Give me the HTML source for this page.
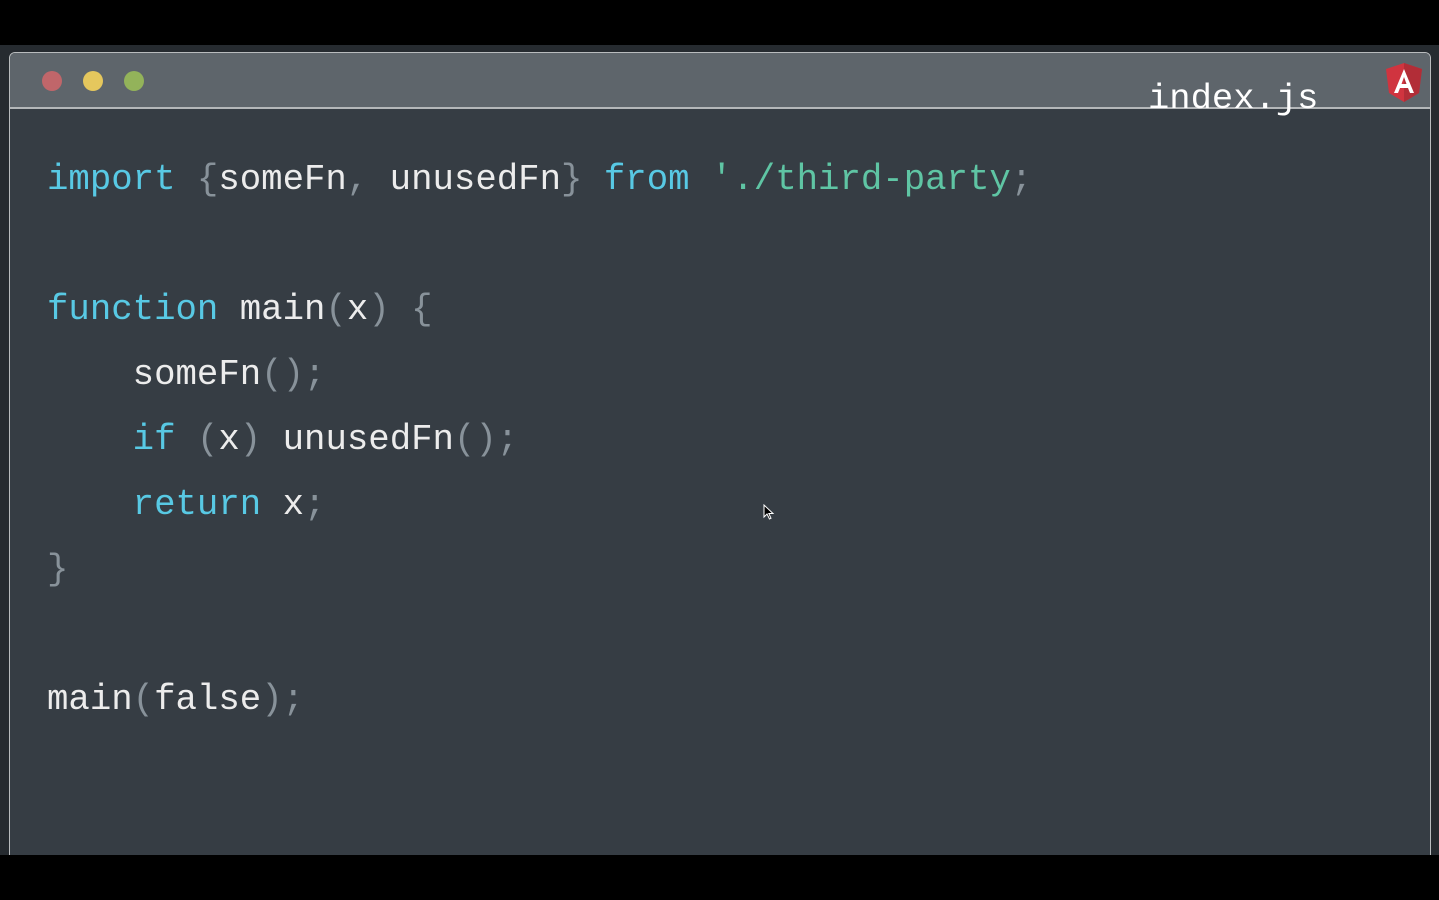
<!DOCTYPE html>
<html><head><meta charset="utf-8"><style>
html,body{margin:0;padding:0;width:1439px;height:900px;overflow:hidden;background:#000;}
.bg{position:absolute;left:0;top:45px;width:1439px;height:810px;background:#262b30;}
.win{position:absolute;left:9px;top:52px;width:1420px;height:820px;border:1px solid #b9bcbe;border-radius:6px;background:#363d44;overflow:hidden;}
.title{position:absolute;left:0;top:0;width:100%;height:54px;background:#5e656b;border-bottom:2px solid #b4b7b9;}
.dot{position:absolute;top:18px;width:20px;height:20px;border-radius:50%;}
.fname{position:absolute;left:1138px;top:25px;font:35.5px "Liberation Mono",monospace;color:#fff;}
.code{position:absolute;left:37px;top:8px;font:35.7px "Liberation Mono",monospace;white-space:pre;color:#ececec;}
.l{position:absolute;left:0;}
.k{color:#58c9e4}.p{color:#88929a}.s{color:#5fc5a4}
.blk{position:absolute;left:0;top:855px;width:1439px;height:45px;background:#000;}
</style></head><body>
<div class="bg"></div>
<div class="win">
 <div class="title">
  <div class="dot" style="left:32px;background:#c0666a"></div>
  <div class="dot" style="left:73px;background:#e5c75d"></div>
  <div class="dot" style="left:114px;background:#93b35a"></div>
  <div class="fname">index.js</div>
  <svg style="position:absolute;left:1375px;top:9px" width="38" height="42" viewBox="0 0 38 42">
   <path d="M19 1 L37 7 L34 31 L19 40 L4 31 L1 7 Z" fill="#d0343f"/>
   <path d="M19 1 L37 7 L34 31 L19 40 Z" fill="#b22d37"/>
   <path d="M19 7 L9 31 H13 L15 26 H23 L25 31 H29 Z M16.5 22 L19 15 L21.5 22 Z" fill="#fff"/>
  </svg>
 </div>
 <div class="code">
  <div class="l" style="top:98px"><span class="k">import</span> <span class="p">{</span>someFn<span class="p">,</span> unusedFn<span class="p">}</span> <span class="k">from</span> <span class="s">'./third-party</span><span class="p">;</span></div>
  <div class="l" style="top:228px"><span class="k">function</span> main<span class="p">(</span>x<span class="p">)</span> <span class="p">{</span></div>
  <div class="l" style="top:293px">    someFn<span class="p">();</span></div>
  <div class="l" style="top:358px">    <span class="k">if</span> <span class="p">(</span>x<span class="p">)</span> unusedFn<span class="p">();</span></div>
  <div class="l" style="top:423px">    <span class="k">return</span> x<span class="p">;</span></div>
  <div class="l" style="top:488px"><span class="p">}</span></div>
  <div class="l" style="top:618px">main<span class="p">(</span>false<span class="p">);</span></div>
 </div>
</div>
<svg style="position:absolute;left:763px;top:504px" width="13" height="19" viewBox="0 0 13 19"><path d="M1 1 L1 13 L4 10 L6.5 15 L8 14.3 L5.8 9.5 L10 9.5 Z" fill="#000" stroke="#fff" stroke-width="1"/></svg>
<div class="blk"></div>
</body></html>
